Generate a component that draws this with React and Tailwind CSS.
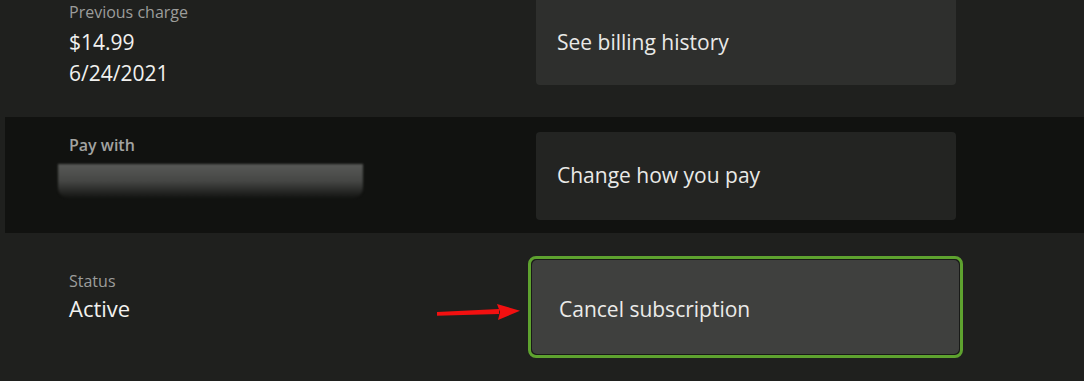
const font = { fontFamily: '"Open Sans", "Noto Sans", sans-serif' };

function ActionButton({ label, className }) {
  return (
    <div className={`flex items-center w-[420px] pl-[21px] text-[21px] text-[#e9e9e7] ${className}`}>
      {label}
    </div>
  );
}

function Arrow() {
  return (
    <svg width="86" height="30" viewBox="0 0 86 30" className="shrink-0">
      <path d="M0 20 L62 17 L62 22 L0 23.8 Z" fill="#f21010" />
      <path d="M60 12 L83 18.7 L61 28 L63 20 Z" fill="#f21010" />
    </svg>
  );
}

export default function App() {
  return (
    <div className="w-[1084px] h-[381px] overflow-hidden bg-[#1f201e] flex flex-col" style={font}>
      {/* Previous charge */}
      <div className="h-[117px] flex shrink-0">
        <div className="w-[536px] pl-[69px] pt-[1px]">
          <div className="text-[16px] leading-[22px] text-[#9c9d9b]">Previous charge</div>
          <div className="text-[21px] leading-[31px] text-[#f1f1ef] mt-[4px]">$14.99</div>
          <div className="text-[21px] leading-[31px] text-[#f1f1ef]">6/24/2021</div>
        </div>
        <ActionButton label="See billing history" className="h-[85px] bg-[#2e2f2d] rounded-b-[4px] pt-[1px]" />
      </div>

      {/* Pay with */}
      <div className="h-[116px] ml-[5px] bg-[#111210] flex shrink-0">
        <div className="w-[531px] pl-[53px] pt-[17px]">
          <div className="pl-[11px] text-[16px] leading-[22px] text-[#a2a3a1] font-semibold">Pay with</div>
          <div className="mt-[8px] w-[305px] h-[34px] rounded-b-[10px] bg-gradient-to-b from-[#585957] via-[#464745] to-[#141513] blur-[1px]"></div>
        </div>
        <ActionButton label="Change how you pay" className="mt-[15px] h-[88px] bg-[#232422] rounded-[4px]" />
      </div>

      {/* Status */}
      <div className="flex items-center h-[148px]">
        <div className="w-[437px] pl-[69px] -mt-[21px]">
          <div className="text-[16px] leading-[22px] text-[#9c9d9b]">Status</div>
          <div className="text-[22px] leading-[31px] text-[#f1f1ef] mt-[1px]">Active</div>
        </div>
        <Arrow />
        <div className="ml-[5px] w-[435px] h-[102px] rounded-[8px] border-[3px] border-[#5ea22f] p-[1px] bg-[#191a18] -mt-[1px]">
          <div className="w-full h-full rounded-[5px] bg-[#3f403e] flex items-center pl-[27px] pt-[6px] text-[21px] text-[#ebebe9]">
            Cancel subscription
          </div>
        </div>
      </div>
    </div>
  );
}
